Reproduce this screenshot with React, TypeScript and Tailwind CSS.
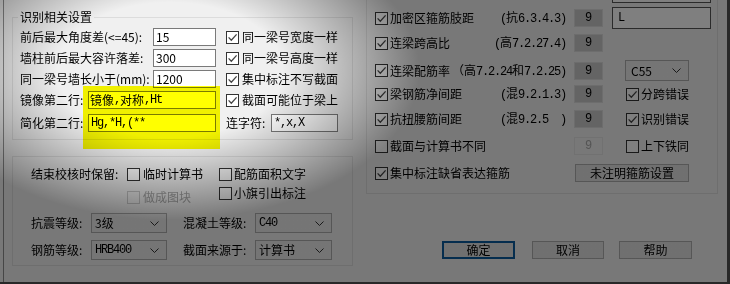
import React from "react";

function Cb({ checked = false, disabled = false }: { checked?: boolean; disabled?: boolean }) {
  return (
    <span
      className={
        disabled
          ? "flex h-[13px] w-[13px] shrink-0 items-center justify-center border border-[#c4c4c4] bg-[#f0f0f0]"
          : "flex h-[13px] w-[13px] shrink-0 items-center justify-center border border-[#333333] bg-white"
      }
    >
      {checked ? (
        <svg width="11" height="11" viewBox="0 0 11 11">
          <path d="M1.6 5.4L4.3 8.2L9.6 2.4" fill="none" stroke="#444444" strokeWidth="1.3" />
        </svg>
      ) : null}
    </span>
  );
}

function Chevron() {
  return (
    <svg width="9" height="5" viewBox="0 0 9 5">
      <path d="M0.5 0.5L4.5 4.5L8.5 0.5" fill="none" stroke="#333333" strokeWidth="1" />
    </svg>
  );
}

function Note({ open, cjk, rest }: { open: string; cjk: string; rest: string }) {
  return (
    <span className="ml-auto mr-[8px] whitespace-pre">
      <span className="font-[family-name:'Liberation_Mono',monospace] tracking-[-1.2px]">{open}</span>
      <span>{cjk}</span>
      <span className="font-[family-name:'Liberation_Mono',monospace] tracking-[-1.2px]">{rest}</span>
    </span>
  );
}

function NineBox({ disabled = false }: { disabled?: boolean }) {
  return (
    <span
      className={
        disabled
          ? "flex h-[18px] w-[29px] shrink-0 items-center justify-center border border-[#e2e2e2] bg-[#f0f0f0] font-[family-name:'Liberation_Mono',monospace] text-[#a8a8a8]"
          : "flex h-[18px] w-[29px] shrink-0 items-center justify-center border border-[#dadada] bg-[#c8c8c8] font-[family-name:'Liberation_Mono',monospace]"
      }
    >
      9
    </span>
  );
}

function Sel({ w, children, mono = false }: { w: string; children: React.ReactNode; mono?: boolean }) {
  return (
    <div className={`flex h-[20px] items-center justify-between border border-[#acacac] bg-[#ebebeb] pl-[3px] pr-[7px] ${w}`}>
      <span className={mono ? "font-[family-name:'Liberation_Mono',monospace] tracking-[-1.2px]" : ""}>{children}</span>
      <Chevron />
    </div>
  );
}

function RightRow({
  label,
  checked = true,
  note,
  box = "on",
}: {
  label: string;
  checked?: boolean;
  note?: { open: string; cjk: string; rest: string };
  box?: "on" | "off";
}) {
  return (
    <div className="flex w-[236px] items-center pl-[8px]">
      <Cb checked={checked} />
      <span className="ml-[2px]">{label}</span>
      {note ? <Note {...note} /> : <span className="ml-auto" />}
      <NineBox disabled={box === "off"} />
    </div>
  );
}

export default function App() {
  return (
    <div className="relative h-[284px] w-[730px] overflow-hidden bg-[#505050] font-[family-name:'Noto_Sans_CJK_SC','Noto_Sans',sans-serif] text-[12px] leading-none text-black">
      <div className="flex h-[282px] w-[727px] bg-[#f0f0f0]">
        <div className="w-[3px]" />
        <div className="w-px bg-[#8c8c8c]" />

        {/* left column */}
        <div className="ml-[8px] flex w-[341px] flex-col">
          {/* group 1 */}
          <div className="relative mt-[17px] h-[123px] border border-[#dcdcdc] pl-[7px] pt-[10px]">
            <span className="absolute left-[5px] top-[-8px] flex h-[14px] items-center bg-[#f0f0f0] px-[2px]">识别相关设置</span>

            <div className="flex h-[18px] items-center">
              <span className="w-[133px]">前后最大角度差(&lt;=45):</span>
              <div className="flex h-[18px] w-[63px] items-center border border-[#7a7a7a] bg-white pl-[2px]">15</div>
              <span className="ml-[10px] flex items-center">
                <Cb checked />
                <span className="ml-[3px]">同一梁号宽度一样</span>
              </span>
            </div>
            <div className="mt-[3px] flex h-[18px] items-center">
              <span className="w-[133px]">墙柱前后最大容许落差:</span>
              <div className="flex h-[18px] w-[63px] items-center border border-[#7a7a7a] bg-white pl-[2px]">300</div>
              <span className="ml-[10px] flex items-center">
                <Cb checked />
                <span className="ml-[3px]">同一梁号高度一样</span>
              </span>
            </div>
            <div className="mt-[3px] flex h-[18px] items-center">
              <span className="w-[133px]">同一梁号墙长小于(mm):</span>
              <div className="flex h-[18px] w-[63px] items-center border border-[#7a7a7a] bg-white pl-[2px]">1200</div>
              <span className="ml-[10px] flex items-center">
                <Cb checked />
                <span className="ml-[3px]">集中标注不写截面</span>
              </span>
            </div>
            <div className="mt-[3px] flex h-[18px] items-center">
              <span className="w-[68px]">镜像第二行:</span>
              <div className="flex h-[18px] w-[128px] items-center border border-[#7a7a7a] bg-white pl-[1px]">
                <span>镜像</span>
                <span className="font-[family-name:'Liberation_Mono',monospace] tracking-[-1.2px]">,</span>
                <span>对称</span>
                <span className="font-[family-name:'Liberation_Mono',monospace] tracking-[-1.2px]">,Ht</span>
              </div>
              <span className="ml-[10px] flex items-center">
                <Cb checked />
                <span className="ml-[3px]">截面可能位于梁上</span>
              </span>
            </div>
            <div className="mt-[5px] flex h-[18px] items-center">
              <span className="w-[68px]">简化第二行:</span>
              <div className="flex h-[18px] w-[128px] items-center border border-[#7a7a7a] bg-white pl-[2px] font-[family-name:'Liberation_Mono',monospace] tracking-[-1.2px]">
                Hg,*H,(**
              </div>
              <span className="ml-[10px] w-[45px]">连字符:</span>
              <div className="flex h-[18px] w-[67px] items-center border border-[#7a7a7a] bg-white pl-[2px] font-[family-name:'Liberation_Mono',monospace] tracking-[-1.2px]">
                *,x,X
              </div>
            </div>
          </div>

          {/* group 2 */}
          <div className="mt-[16px] h-[110px] border border-[#dcdcdc] pl-[18px] pt-[10px]">
            <div className="flex">
              <span className="flex h-[14px] w-[96px] items-center">结束校核时保留:</span>
              <div className="flex w-[92px] flex-col">
                <div className="flex h-[14px] items-center">
                  <Cb />
                  <span className="ml-[3px]">临时计算书</span>
                </div>
                <div className="mt-[9px] flex h-[14px] items-center">
                  <Cb disabled />
                  <span className="ml-[3px] text-[#a4a4a4]">做成图块</span>
                </div>
              </div>
              <div className="flex flex-col">
                <div className="flex h-[14px] items-center">
                  <Cb />
                  <span className="ml-[2px]">配筋面积文字</span>
                </div>
                <div className="mt-[5px] flex h-[14px] items-center">
                  <Cb />
                  <span className="ml-[2px]">小旗引出标注</span>
                </div>
              </div>
            </div>
            <div className="mt-[9px] flex h-[20px] items-center">
              <span className="w-[60px]">抗震等级:</span>
              <Sel w="w-[76px]">3级</Sel>
              <span className="ml-[16px] w-[72px]">混凝土等级:</span>
              <Sel w="w-[77px]" mono>C40</Sel>
            </div>
            <div className="mt-[7px] flex h-[20px] items-center">
              <span className="w-[60px]">钢筋等级:</span>
              <Sel w="w-[76px]" mono>HRB400</Sel>
              <span className="ml-[16px] w-[72px]">截面来源于:</span>
              <Sel w="w-[77px]">计算书</Sel>
            </div>
          </div>
        </div>

        {/* right column */}
        <div className="ml-[13px] flex w-[352px] flex-col">
          <div className="h-[194px] border-x border-b border-[#dcdcdc]">
            <div className="flex h-[3px]">
              <div className="w-[245px]" />
              <div className="h-[3px] w-[99px] border-x border-b border-[#555555] bg-white" />
            </div>
            <div className="mt-[4px] flex h-[22px] items-center">
              <RightRow label="加密区箍筋肢距" note={{ open: "(", cjk: "抗", rest: "6.3.4.3)" }} />
              <div className="ml-[9px] flex h-[22px] w-[99px] items-center border border-[#555555] bg-white pl-[5px] font-[family-name:'Liberation_Mono',monospace]">
                L
              </div>
            </div>
            <div className="mt-[5px] flex h-[18px] items-center">
              <RightRow label="连梁跨高比" note={{ open: "(", cjk: "高", rest: "7.2.27.4)" }} />
            </div>
            <div className="mt-[8px] flex h-[21px] items-center">
              <div className="flex w-[236px] items-center pl-[8px]">
                <Cb checked />
                <span className="ml-[2px]">连梁配筋率</span>
                <span className="ml-auto mr-[8px] whitespace-pre">
                  <span>（高</span>
                  <span className="font-[family-name:'Liberation_Mono',monospace] tracking-[-1.2px]">7.2.24</span>
                  <span>和</span>
                  <span className="font-[family-name:'Liberation_Mono',monospace] tracking-[-1.2px]">7.2.25)</span>
                </span>
                <NineBox />
              </div>
              <div className="ml-[22px] flex h-[21px] w-[64px] items-center justify-between border border-[#acacac] bg-[#ebebeb] pl-[5px] pr-[7px]">
                <span>C55</span>
                <Chevron />
              </div>
            </div>
            <div className="mt-[4px] flex h-[18px] items-center">
              <RightRow label="梁钢筋净间距" note={{ open: "(", cjk: "混", rest: "9.2.1.3)" }} />
              <div className="ml-[23px] flex items-center">
                <Cb checked />
                <span className="ml-[2px]">分跨错误</span>
              </div>
            </div>
            <div className="mt-[7px] flex h-[18px] items-center">
              <RightRow label="抗扭腰筋间距" note={{ open: "(", cjk: "混", rest: "9.2.5  )" }} />
              <div className="ml-[23px] flex items-center">
                <Cb checked />
                <span className="ml-[2px]">识别错误</span>
              </div>
            </div>
            <div className="mt-[9px] flex h-[18px] items-center">
              <RightRow label="截面与计算书不同" checked={false} box="off" />
              <div className="ml-[23px] flex items-center">
                <Cb />
                <span className="ml-[2px]">上下铁同</span>
              </div>
            </div>
            <div className="mt-[9px] flex h-[18px] items-center">
              <div className="flex w-[207px] items-center pl-[8px]">
                <Cb checked />
                <span className="ml-[2px]">集中标注缺省表达箍筋</span>
              </div>
              <div className="ml-[1px] flex h-[18px] w-[114px] items-center justify-center border border-[#adadad] bg-[#e1e1e1]">
                未注明箍筋设置
              </div>
            </div>
          </div>

          <div className="mt-[47px] flex h-[18px]">
            <div className="ml-[76px] flex h-[18px] w-[73px] items-center justify-center border-2 border-[#0a5a9c] bg-[#e1e1e1]">
              确定
            </div>
            <div className="ml-[17px] flex h-[18px] w-[72px] items-center justify-center border border-[#adadad] bg-[#e1e1e1]">
              取消
            </div>
            <div className="ml-[15px] flex h-[18px] w-[73px] items-center justify-center border border-[#adadad] bg-[#e1e1e1]">
              帮助
            </div>
          </div>
        </div>
      </div>

      {/* yellow marker highlight */}
      <div className="pointer-events-none absolute left-[83px] top-[86px] h-[63px] w-[137px] bg-[#ffff00] mix-blend-multiply" />
      {/* spotlight dimming */}
      <div className="pointer-events-none absolute inset-0 bg-[radial-gradient(ellipse_250px_150px_at_170px_70px,rgba(0,0,0,0)_45%,rgba(0,0,0,0.5)_100%)]" />
    </div>
  );
}
